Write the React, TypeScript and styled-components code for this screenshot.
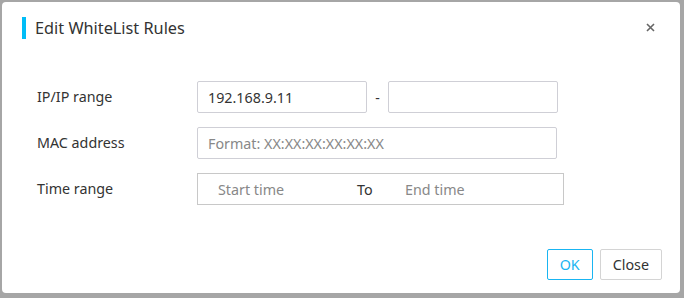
import styled, { createGlobalStyle } from 'styled-components';

const GlobalStyle = createGlobalStyle`
  html, body {
    margin: 0;
    padding: 0;
    background: #a6a6a6;
    font-family: "Noto Sans", "Open Sans", Arial, sans-serif;
  }
  * {
    box-sizing: border-box;
  }
`;

const Page = styled.div`
  width: 684px;
  height: 298px;
  padding: 2px 4px 5px 2px;
`;

const Dialog = styled.div`
  position: relative;
  width: 678px;
  height: 291px;
  background: #ffffff;
  border-radius: 4px;
  display: flex;
  flex-direction: column;
`;

const Header = styled.div`
  display: flex;
  align-items: center;
  height: 22px;
  margin: 15px 20px 0 20px;
`;

const Accent = styled.span`
  width: 4px;
  height: 22px;
  background: #00bdf7;
  margin-right: 9px;
`;

const Title = styled.h2`
  margin: 0;
  font-size: 16.3px;
  font-weight: normal;
  color: #333;
  line-height: 22px;
`;

const CloseIcon = styled.button`
  position: absolute;
  top: 18px;
  right: 23px;
  width: 14px;
  height: 14px;
  padding: 0;
  border: none;
  background: transparent;
  cursor: pointer;
  display: flex;
  align-items: center;
  justify-content: center;
`;

const Form = styled.div`
  display: flex;
  flex-direction: column;
  gap: 14px;
  margin: 42px 0 0 35px;
`;

const Row = styled.div`
  display: flex;
  align-items: center;
  height: 32px;
`;

const Label = styled.label`
  width: 160px;
  font-size: 14.3px;
  color: #333;
  margin-top: -2px;
`;

const Input = styled.input<{ $width: number }>`
  width: ${({ $width }) => $width}px;
  height: 32px;
  padding: 0 10px;
  border: 1px solid #cfcfd6;
  border-radius: 2px;
  font-family: inherit;
  font-size: 14.3px;
  color: #333;
  outline: none;

  &::placeholder {
    color: #888;
  }
`;

const Dash = styled.span`
  width: 21px;
  text-align: center;
  font-size: 14px;
  color: #333;
`;

const TimeRange = styled.div`
  width: 367px;
  height: 32px;
  display: flex;
  align-items: center;
  border: 1px solid #c8c8c8;
  padding-left: 20px;
  font-size: 14.3px;
`;

const TimeText = styled.span<{ $width: number; $muted?: boolean }>`
  width: ${({ $width }) => $width}px;
  color: ${({ $muted }) => ($muted ? '#888' : '#333')};
`;

const Footer = styled.div`
  margin-top: auto;
  display: flex;
  justify-content: flex-end;
  gap: 7px;
  padding: 0 18px 13px 0;
`;

const Button = styled.button<{ $primary?: boolean }>`
  height: 31px;
  padding: 0 12px;
  min-width: 46px;
  background: #fff;
  border: 1px solid ${({ $primary }) => ($primary ? '#19b5f2' : '#d4d4d4')};
  color: ${({ $primary }) => ($primary ? '#19b5f2' : '#333')};
  border-radius: 2px;
  font-family: inherit;
  font-size: 14.3px;
  cursor: pointer;
`;

export default function App() {
  return (
    <>
      <GlobalStyle />
      <Page>
        <Dialog>
          <Header>
            <Accent />
            <Title>Edit WhiteList Rules</Title>
          </Header>
          <CloseIcon aria-label="close">
            <svg width="9" height="9" viewBox="0 0 9 9">
              <path d="M1 1 L8 8 M8 1 L1 8" stroke="#666" strokeWidth="1.6" />
            </svg>
          </CloseIcon>

          <Form>
            <Row>
              <Label>IP/IP range</Label>
              <Input $width={170} defaultValue="192.168.9.11" />
              <Dash>-</Dash>
              <Input $width={170} />
            </Row>
            <Row>
              <Label>MAC address</Label>
              <Input $width={360} placeholder="Format: XX:XX:XX:XX:XX:XX" />
            </Row>
            <Row>
              <Label>Time range</Label>
              <TimeRange>
                <TimeText $width={139} $muted>Start time</TimeText>
                <TimeText $width={48}>To</TimeText>
                <TimeText $width={100} $muted>End time</TimeText>
              </TimeRange>
            </Row>
          </Form>

          <Footer>
            <Button $primary>OK</Button>
            <Button>Close</Button>
          </Footer>
        </Dialog>
      </Page>
    </>
  );
}
